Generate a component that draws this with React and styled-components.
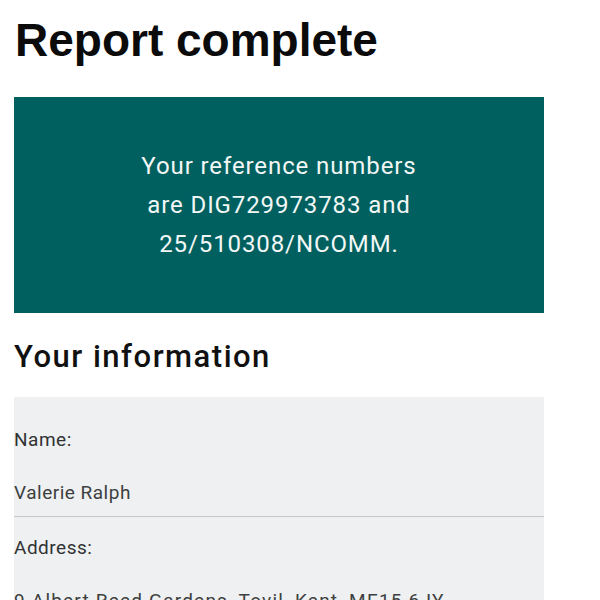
import React from 'react'
import styled, { createGlobalStyle } from 'styled-components'

const GlobalStyle = createGlobalStyle`
    html, body {
        margin: 0;
        padding: 0;
        background: #ffffff;
    }
    body {
        font-family: Roboto, "Liberation Sans", sans-serif;
    }
`

const details = [
    { label: 'Name:', value: 'Valerie Ralph', tracking: 0.5 },
    { label: 'Address:', value: '9 Albert Reed Gardens, Tovil, Kent, ME15 6JY', tracking: 1.2 },
]

function App() {
    return (
        <>
            <GlobalStyle />
            <Page>
                <Title>Report complete</Title>
                <Banner>
                    <BannerText>
                        Your reference numbers
                        <br />
                        are DIG729973783 and
                        <br />
                        25/510308/NCOMM.
                    </BannerText>
                </Banner>
                <SectionHeading>Your information</SectionHeading>
                <InfoList>
                    {details.map(item => (
                        <InfoRow key={item.label}>
                            <InfoLabel>{item.label}</InfoLabel>
                            <InfoValue $tracking={item.tracking}>{item.value}</InfoValue>
                        </InfoRow>
                    ))}
                </InfoList>
            </Page>
        </>
    )
}

const Page = styled.main`
    width: 530px;
    padding: 0 0 0 14px;
    display: flex;
    flex-direction: column;
`

const Title = styled.h1`
    font-family: "Liberation Sans", Arial, sans-serif;
    font-weight: 700;
    font-size: 46px;
    line-height: 50px;
    color: #0b0b0b;
    margin: 15px 0 32px 1px;
`

const Banner = styled.section`
    background: #00605f;
    height: 216px;
    display: flex;
    align-items: center;
    justify-content: center;
`

const BannerText = styled.p`
    margin: 0;
    color: #f2f7f6;
    font-size: 24px;
    line-height: 39px;
    text-align: center;
    letter-spacing: 0.9px;
`

const SectionHeading = styled.h2`
    font-size: 31px;
    font-weight: 500;
    line-height: 38px;
    color: #111;
    margin: 25px 0 21px 0;
    letter-spacing: 1.5px;
`

const InfoList = styled.div`
    background: #eef0f1;
    display: flex;
    flex-direction: column;
`

const InfoRow = styled.div`
    display: flex;
    flex-direction: column;
    padding: 31px 0 11px 0;
    gap: 29px;
    border-bottom: 1px solid #c4c6c8;

    & + & {
        padding-top: 19px;
    }
`

const InfoLabel = styled.span`
    font-size: 19px;
    line-height: 24px;
    color: #303233;
    letter-spacing: 0.5px;
`

const InfoValue = styled.span`
    font-size: 19px;
    line-height: 24px;
    color: #3d3f40;
    letter-spacing: ${({ $tracking }) => $tracking}px;
    white-space: nowrap;
`

export default App
